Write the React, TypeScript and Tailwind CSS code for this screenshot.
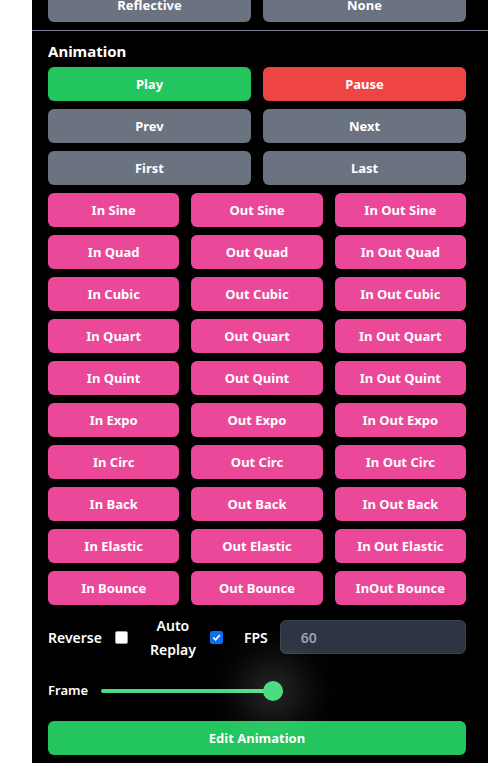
import React from 'react';

const font = { fontFamily: '"Noto Sans", "Open Sans", Arial, sans-serif' };

const easings = [
  ['In Sine', 'Out Sine', 'In Out Sine'],
  ['In Quad', 'Out Quad', 'In Out Quad'],
  ['In Cubic', 'Out Cubic', 'In Out Cubic'],
  ['In Quart', 'Out Quart', 'In Out Quart'],
  ['In Quint', 'Out Quint', 'In Out Quint'],
  ['In Expo', 'Out Expo', 'In Out Expo'],
  ['In Circ', 'Out Circ', 'In Out Circ'],
  ['In Back', 'Out Back', 'In Out Back'],
  ['In Elastic', 'Out Elastic', 'In Out Elastic'],
  ['In Bounce', 'Out Bounce', 'InOut Bounce'],
];

function Btn({ label, color }: { label: string; color: string }) {
  return (
    <button className={`h-[34px] pt-px rounded-md ${color} text-white text-[13px] font-bold`}>{label}</button>
  );
}

export default function App() {
  return (
    <div className="flex h-[763px] bg-white overflow-hidden" style={font}>
      <div className="w-[32px] shrink-0 bg-white" />
      <div className="flex-1 bg-black overflow-hidden">
        {/* previous section tail */}
        <div className="px-4 pr-[22px] -mt-[12px] grid grid-cols-2 gap-3">
          <Btn label="Reflective" color="bg-[#6b7280]" />
          <Btn label="None" color="bg-[#6b7280]" />
        </div>
        <hr className="mt-[8px] border-t border-[#7d8294]" />

        <div className="px-4 pr-[22px] pt-[10px]">
          <h2 className="text-[15px] font-bold text-white leading-[20px] mb-[6px]">Animation</h2>

          <div className="grid grid-cols-2 gap-x-3 gap-y-2">
            <Btn label="Play" color="bg-[#22c55e]" />
            <Btn label="Pause" color="bg-[#ef4444]" />
            <Btn label="Prev" color="bg-[#6b7280]" />
            <Btn label="Next" color="bg-[#6b7280]" />
            <Btn label="First" color="bg-[#6b7280]" />
            <Btn label="Last" color="bg-[#6b7280]" />
          </div>

          <div className="grid grid-cols-3 gap-x-3 gap-y-2 mt-2">
            {easings.flat().map((e) => (
              <Btn key={e} label={e} color="bg-[#ec4899]" />
            ))}
          </div>

          {/* options */}
          <div className="flex items-center mt-[15px] h-[34px] text-white text-[14px] font-semibold">
            <span>Reverse</span>
            <span className="ml-[13px] w-[13px] h-[13px] bg-white rounded-[2px] border border-gray-400" />
            <span className="ml-[21px] w-[48px] pt-px text-center leading-[24px]">Auto Replay</span>
            <span className="ml-[13px] w-[13px] h-[13px] rounded-[2px] bg-[#0b6ff0] flex items-center justify-center">
              <svg viewBox="0 0 12 12" className="w-[11px] h-[11px]">
                <path d="M2.5 6.2 L5 8.6 L9.6 3.4" fill="none" stroke="white" strokeWidth="1.8" />
              </svg>
            </span>
            <span className="ml-[21px]">FPS</span>
            <div className="ml-3 flex-1 h-[34px] rounded-md bg-[#2d3340] border border-[#3b4252] flex items-center px-5 text-gray-400 text-[14px] font-semibold">
              60
            </div>
          </div>

          {/* frame slider */}
          <div className="flex items-center mt-[27px] h-[20px]">
            <span className="text-white text-[13px] font-semibold">Frame</span>
            <div className="relative ml-[13px] w-[182px] h-[20px] flex items-center">
              <div className="w-full h-[4px] rounded-full bg-[#4ade80]" />
              <div className="absolute right-0 top-0 w-[20px] h-[20px] rounded-full bg-[#4ade80] shadow-[0_0_40px_20px_rgba(255,255,255,0.18)]" />
            </div>
          </div>

          <button className="mt-[20px] w-full h-[34px] pt-px rounded-md bg-[#22c55e] text-white text-[13px] font-bold">
            Edit Animation
          </button>
        </div>
      </div>
    </div>
  );
}
